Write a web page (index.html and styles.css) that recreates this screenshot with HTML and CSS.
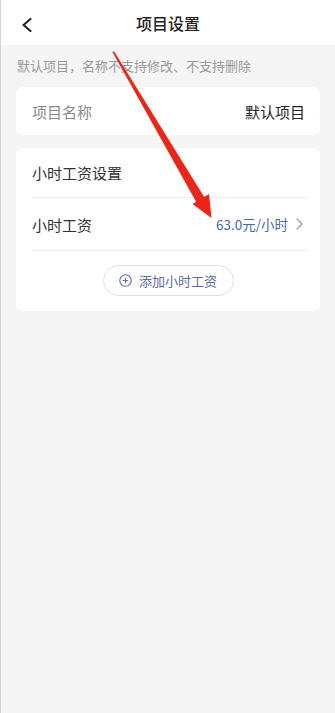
FILE: index.html
```html
<!DOCTYPE html>
<html lang="zh">
<head>
<meta charset="utf-8">
<title>项目设置</title>
<link rel="stylesheet" href="styles.css">
</head>
<body>
<div class="page">
  <header class="nav">
    <svg class="back" width="12" height="14" viewBox="0 0 12 14"><path d="M9.5 1 L2.5 7 L9.5 13" fill="none" stroke="#222" stroke-width="2" stroke-linecap="round" stroke-linejoin="round"/></svg>
    <h1 class="title">项目设置</h1>
  </header>
  <main class="content">
    <p class="note">默认项目，名称不支持修改、不支持删除</p>
    <section class="card">
      <div class="row row-name">
        <span class="label muted">项目名称</span>
        <span class="value">默认项目</span>
      </div>
    </section>
    <section class="card">
      <div class="row row-head">
        <span class="label">小时工资设置</span>
      </div>
      <div class="divider"></div>
      <div class="row row-wage">
        <span class="label">小时工资</span>
        <span class="value blue">63.0元/小时
          <svg class="chev" width="7" height="12" viewBox="0 0 7 12"><path d="M1 1 L6 6 L1 11" fill="none" stroke="#999" stroke-width="1.2" stroke-linecap="round" stroke-linejoin="round"/></svg>
        </span>
      </div>
      <div class="divider"></div>
      <div class="add-wrap">
        <button class="add-btn">
          <svg width="13" height="13" viewBox="0 0 13 13"><circle cx="6.5" cy="6.5" r="5.7" fill="none" stroke="#5b6aa6" stroke-width="1.1"/><path d="M6.5 3.8 V9.2 M3.8 6.5 H9.2" stroke="#5b6aa6" stroke-width="1.1"/></svg>
          <span>添加小时工资</span>
        </button>
      </div>
    </section>
  </main>
  <svg class="annot" width="335" height="713" viewBox="0 0 335 713">
    <polygon points="112.5,52 114,51.3 204.5,197.5 196.5,202.5" fill="#ee2418"/>
    <polygon points="211.5,218 209,194 192.5,204" fill="#ee2418"/>
  </svg>
</div>
</body>
</html>
```
FILE: styles.css
```css
* { box-sizing: border-box; }
html, body { margin: 0; padding: 0; }
body {
  font-family: "Noto Sans CJK SC", "Noto Sans", sans-serif;
  background: #f5f5f5;
}
.page {
  position: relative;
  width: 335px;
  min-height: 713px;
  background: #f5f5f5;
  border-left: 1px solid #d4d4d4;
}
.nav {
  height: 45px;
  background: #fff;
  display: flex;
  align-items: center;
  justify-content: center;
  position: relative;
}
.back {
  position: absolute;
  left: 20px;
  top: 18px;
}
.title {
  margin: 0;
  font-size: 16px;
  font-weight: 500;
  color: #222;
  line-height: 22px;
}
.content {
  padding: 0 15px 0 15px;
}
.note {
  margin: 0;
  height: 42px;
  line-height: 42px;
  font-size: 13px;
  color: #999;
  padding-left: 1px;
}
.card {
  background: #fff;
  border-radius: 8px;
  margin-bottom: 13px;
}
.row {
  display: flex;
  align-items: center;
  justify-content: space-between;
  padding: 0 15px 0 16px;
  font-size: 15px;
}
.row-name { height: 48px; }
.row-head { height: 49px; }
.row-wage { height: 52px; padding-right: 17px; }
.label { color: #333; }
.muted { color: #888; }
.value { color: #222; display: flex; align-items: center; }
.blue { color: #4a68ad; font-size: 13.5px; }
.chev { margin-left: 8px; }
.divider {
  height: 1px;
  background: #efefef;
  margin: 0 12px 0 16px;
}
.add-wrap {
  display: flex;
  justify-content: center;
  padding: 14px 0 15px;
}
.add-btn {
  display: flex;
  align-items: center;
  gap: 7px;
  height: 31px;
  width: 131px;
  justify-content: center;
  border: 1px solid #dcdfe8;
  border-radius: 16px;
  background: #fff;
  font-family: inherit;
  font-size: 13px;
  color: #5b6aa6;
  padding: 0;
}
.annot {
  position: absolute;
  left: -1px;
  top: 0;
  pointer-events: none;
}
```
